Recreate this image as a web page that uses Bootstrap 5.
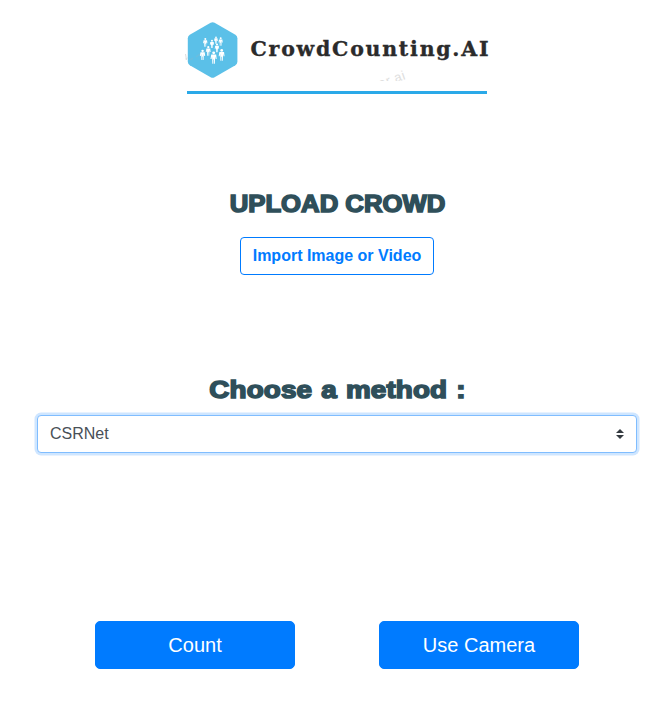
<!DOCTYPE html>
<html lang="en">
<head>
<meta charset="utf-8">
<meta name="viewport" content="width=device-width, initial-scale=1">
<title>CrowdCounting.AI</title>
<link href="https://cdn.jsdelivr.net/npm/bootstrap@5.3.0/dist/css/bootstrap.min.css" rel="stylesheet">
<style>
body{font-family:"Liberation Sans",Arial,sans-serif;background:#fff}
.page{width:600px;margin-left:37px}
.brand{width:310px;height:72px;margin-top:19px;margin-left:147px}
.brand svg{display:block}
.rule{width:300px;height:3px;background:#2aa9e8}
.heading{font-size:24.6px;line-height:31px;font-weight:700;color:#2f4f5a;-webkit-text-stroke:1.6px #2f4f5a;white-space:nowrap}
.upload-title{margin-top:94px;letter-spacing:0;transform:translateX(.5px) scaleX(1.045)}
.method-title{margin-top:99px;letter-spacing:.15px;word-spacing:1px;transform:translateX(.5px) scaleX(1.13)}
.btn-import{--bs-btn-color:#007bff;--bs-btn-border-color:#007bff;width:194px;height:38px;border-radius:4px;margin-top:18px}
.method{height:38px;margin-top:10px;padding:6px 28px 6px 12px;border:1px solid #80bdff;border-radius:4px;color:#495057;box-shadow:0 0 0 2.5px rgba(0,123,255,.19);background-size:8px 10px;background-position:right 12px center;background-image:url("data:image/svg+xml,%3csvg xmlns='http://www.w3.org/2000/svg' viewBox='0 0 4 5'%3e%3cpath fill='%23343a40' d='M2 0L0 2h4zM2 5L0 3h4z'/%3e%3c/svg%3e")}
.actions{margin-top:168px;gap:84px}
.btn-act{--bs-btn-bg:#007bff;--bs-btn-border-color:#007bff;width:200px;height:48px;border-radius:5px;font-size:20px;line-height:30px}
</style>
<script src="https://cdn.jsdelivr.net/npm/bootstrap@5.3.0/dist/js/bootstrap.bundle.min.js"></script>
</head>
<body>
<main class="page d-flex flex-column">
  <header class="brand flex-shrink-0">
    <svg width="310" height="72" viewBox="184 19 310 72" role="img" aria-label="CrowdCounting.AI">
      <defs>
        <g id="person"><circle cx="0" cy="-4.7" r="1.4"/><path d="M-2.400-3h4.800l.5 4.200h-1l-.5-2.400-.3 7H.3V1.700h-.6v4.100h-1l-.3-7-.5 2.400h-1z"/></g>
        <clipPath id="cut"><rect x="375" y="64" width="40" height="17"/></clipPath>
      </defs>
      <path d="M185.500 54l1 6m-1-1l2-1" stroke="#ddd" fill="none"/>
      <path d="M210.600 22.800q2-1.100 4 0l20.800 12q2 1.200 2 3.400v23.600q0 2.200-2 3.400l-20.800 12q-2 1.100-4 0l-20.800-12q-2-1.200-2-3.400V38.200q0-2.200 2-3.400z" fill="#5bc0e8"/>
      <path d="M190 60l3-2m3-1l4-3m2-1l4-2" stroke="#6dbcdc" stroke-width="1.500"/>
      <g fill="#fff">
        <use href="#person" transform="translate(205.300 42.500) scale(.72)"/>
        <use href="#person" transform="translate(216 40.200) scale(.62)"/>
        <use href="#person" transform="translate(212 44) scale(.7)"/>
        <use href="#person" transform="translate(220.700 41.600) scale(.7)"/>
        <use href="#person" transform="translate(217 47.900) scale(.74)"/>
        <use href="#person" transform="translate(208.300 51) scale(.8)"/>
        <use href="#person" transform="translate(202.600 55) scale(.88)"/>
        <use href="#person" transform="translate(221.700 55) scale(.98)"/>
        <use href="#person" transform="translate(213.700 57.700) scale(1.030)"/>
      </g>
      <text x="250.500" y="56" textLength="238" font-family="'DejaVu Serif',serif" font-size="20.500" font-weight="700" fill="#2b2b2b" stroke="#2b2b2b" stroke-width=".35">CrowdCounting.AI</text>
      <g clip-path="url(#cut)"><text transform="translate(380 88) rotate(-19)" font-family="Liberation Sans,sans-serif" font-size="13" letter-spacing=".7" fill="#dedede">er.ai</text></g>
    </svg>
  </header>
  <div class="rule flex-shrink-0 align-self-center"></div>
  <h1 class="heading upload-title text-center mb-0">UPLOAD CROWD</h1>
  <button type="button" class="btn btn-outline-primary btn-import fw-bold align-self-center px-0">Import Image or Video</button>
  <h2 class="heading method-title text-center mb-0">Choose a method :</h2>
  <select class="form-select method" aria-label="Method"><option selected>CSRNet</option></select>
  <div class="actions d-flex justify-content-center">
    <button type="button" class="btn btn-primary btn-act">Count</button>
    <button type="button" class="btn btn-primary btn-act">Use Camera</button>
  </div>
</main>
</body>
</html>
